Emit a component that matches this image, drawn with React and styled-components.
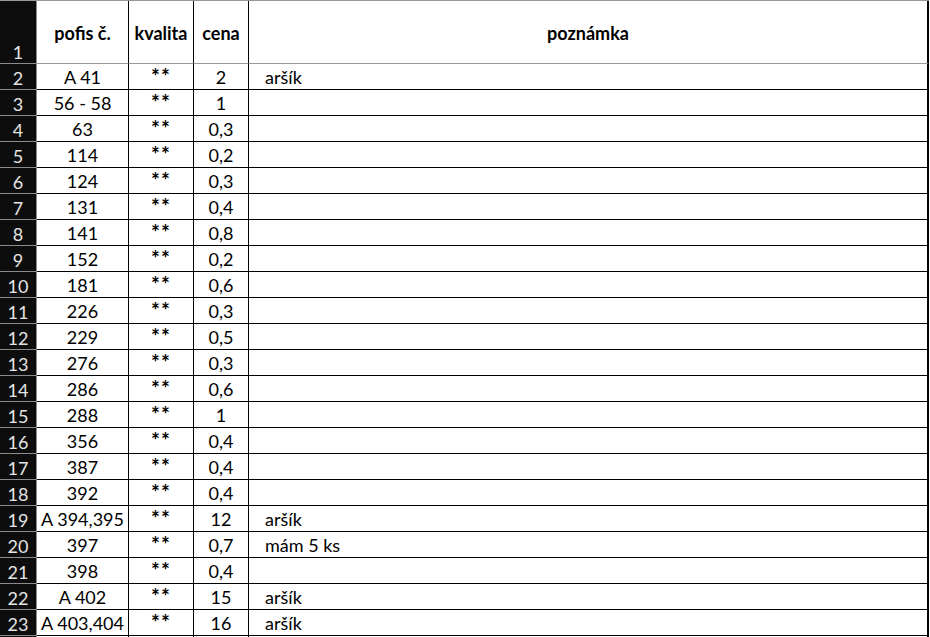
import React from 'react';
import styled, { createGlobalStyle } from 'styled-components';

const GlobalStyle = createGlobalStyle`
    html, body {
        margin: 0;
        padding: 0;
        background: #fff;
        overflow: hidden;
    }
    body {
        font-family: Lato, "Open Sans", sans-serif;
    }
`

const Sheet = styled.div`
    display: grid;
    grid-template-columns: 37px 92px 65px 55px 680px;
    grid-template-rows: 63px;
    grid-auto-rows: 26px;
    border-top: 1px solid #9a9a9a;
    width: 929px;
    height: 636px;
    overflow: hidden;
    font-size: 18px;
    color: #000;
`

const RowHead = styled.div`
    box-sizing: border-box;
    background: #0d0d0d;
    color: #e4e4e4;
    border-right: 1px solid #8c8c8c;
    border-bottom: 1px solid #8c8c8c;
    display: flex;
    align-items: flex-end;
    justify-content: center;
    padding-bottom: 1px;
    line-height: 20px;
`

const Cell = styled.div`
    box-sizing: border-box;
    border-right: ${p => p.$last ? '2px' : '1px'} solid #000;
    border-bottom: 1px solid #000;
    display: flex;
    align-items: flex-end;
    justify-content: ${p => p.$left ? 'flex-start' : 'center'};
    padding: 0 0 2px ${p => p.$left ? '16px' : '0'};
    line-height: 20px;
    white-space: nowrap;
`

const Stars = styled.span`
    font-size: 21px;
    font-weight: 700;
    line-height: 20px;
    letter-spacing: 1px;
    transform: translateY(-1px);
`

const HeadCell = styled.div`
    box-sizing: border-box;
    border-right: ${p => p.$last ? '2px' : '1px'} solid #000;
    border-bottom: 1px solid #9a9a9a;
    display: flex;
    align-items: center;
    justify-content: center;
    padding-top: 1px;
    font-weight: 700;
    white-space: nowrap;
`

const rows = [
    ['A 41', '2', 'aršík'],
    ['56 - 58', '1', ''],
    ['63', '0,3', ''],
    ['114', '0,2', ''],
    ['124', '0,3', ''],
    ['131', '0,4', ''],
    ['141', '0,8', ''],
    ['152', '0,2', ''],
    ['181', '0,6', ''],
    ['226', '0,3', ''],
    ['229', '0,5', ''],
    ['276', '0,3', ''],
    ['286', '0,6', ''],
    ['288', '1', ''],
    ['356', '0,4', ''],
    ['387', '0,4', ''],
    ['392', '0,4', ''],
    ['A 394,395', '12', 'aršík'],
    ['397', '0,7', 'mám 5 ks'],
    ['398', '0,4', ''],
    ['A 402', '15', 'aršík'],
    ['A 403,404', '16', 'aršík'],
    ['', '', ''],
]

const App = () => {
    return (
        <>
            <GlobalStyle />
            <Sheet>
                <RowHead>1</RowHead>
                <HeadCell>pofis č.</HeadCell>
                <HeadCell>kvalita</HeadCell>
                <HeadCell>cena</HeadCell>
                <HeadCell $last>poznámka</HeadCell>
                {rows.map((r, i) => (
                    <React.Fragment key={i}>
                        <RowHead>{i < 22 ? i + 2 : ''}</RowHead>
                        <Cell>{r[0]}</Cell>
                        <Cell>{i < 22 && <Stars>**</Stars>}</Cell>
                        <Cell>{r[1]}</Cell>
                        <Cell $left $last>{r[2]}</Cell>
                    </React.Fragment>
                ))}
            </Sheet>
        </>
    )
}

export default App;
